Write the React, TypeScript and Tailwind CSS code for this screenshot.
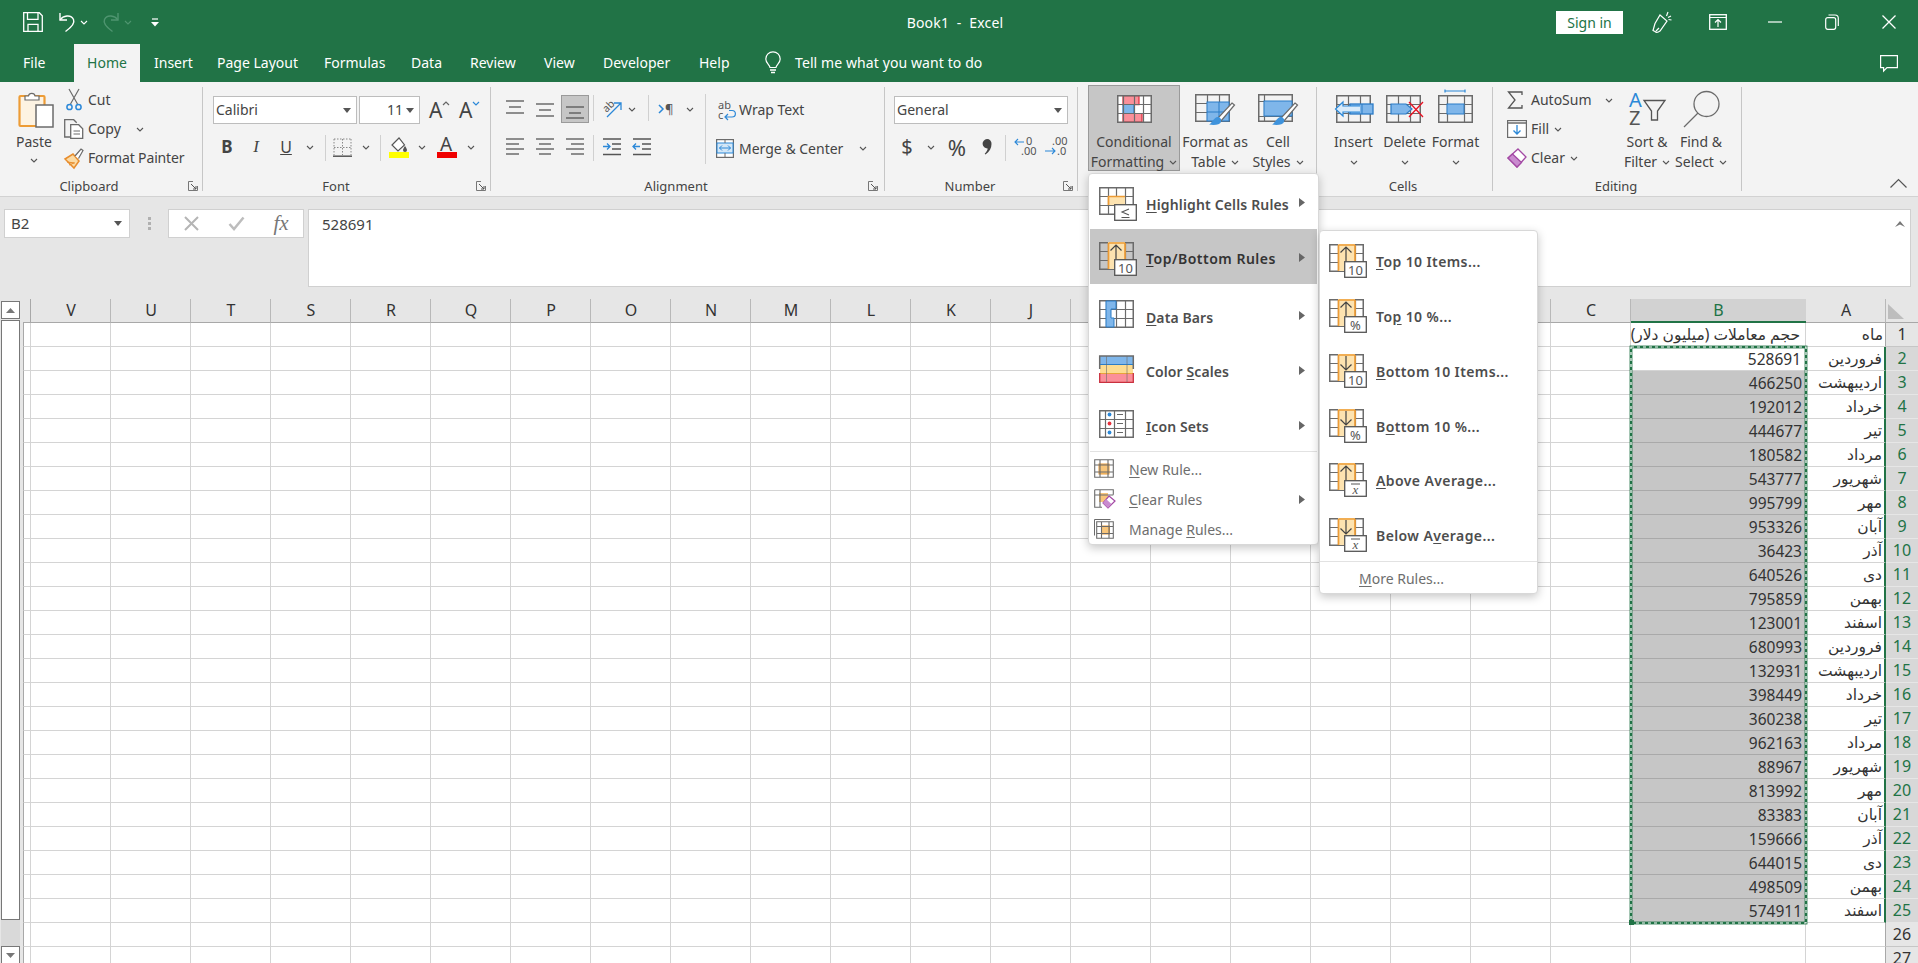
import React from "react";

type P = { w: number; h: number; children?: React.ReactNode; className?: string };
const S = ({ w, h, children, className }: P) => (
  <svg width={w} height={h} viewBox={`0 0 ${w} ${h}`} fill="none" className={`block shrink-0 overflow-visible ${className ?? ""}`}>
    {children}
  </svg>
);
const G = "#6b6b6b";
const FONT = "Noto Sans, DejaVu Sans, sans-serif";

const Chev = ({ className, c = "#555" }: { className?: string; c?: string }) => (
  <svg width="8" height="5" viewBox="0 0 8 5" fill="none" className={`block shrink-0 ${className ?? ""}`}>
    <path d="M1 1l3 3 3-3" stroke={c} strokeWidth="1.1" />
  </svg>
);
const Launcher = () => (
  <svg width="10" height="10" viewBox="0 0 10 10" fill="none" className="block shrink-0">
    <path d="M9.5 5v4.5H.5V.5H5" stroke="#777" />
    <path d="M3 3l5 5M8 5v3H5" stroke="#555" />
  </svg>
);
const Drop = () => (
  <svg width="8" height="5" viewBox="0 0 8 5" className="block shrink-0">
    <path d="M0 0h8L4 5z" fill="#555" />
  </svg>
);

/* ---------- title bar icons ---------- */
const SaveIcon = () => (
  <S w={20} h={20}>
    <path d="M.7.7h15.6l3 3v15.6H.7z M4.5 .7v6.6h10.5V.7 M5 19.3v-7h10v7" stroke="#fff" strokeWidth="1.3" />
  </S>
);
const UndoIcon = ({ c = "#fff", className }: { c?: string; className?: string }) => (
  <S w={18} h={20} className={className}>
    <path d="M2 1v7h7" stroke={c} strokeWidth="1.4" />
    <path d="M2.2 8C5 3.5 13 2 15.5 7.5 17.5 12 11 17 7.5 19.5" stroke={c} strokeWidth="1.4" />
  </S>
);
const CustomizeIcon = () => (
  <S w={8} h={9}>
    <path d="M1 1h6" stroke="#fff" strokeWidth="1.2" />
    <path d="M0 4h8L4 8.5z" fill="#fff" />
  </S>
);
const PenIcon = () => (
  <S w={22} h={24}>
    <path d="M9 5l7 6-7 10c-2 1.500-4 1.500-5 .5l-2-1 2-7z" stroke="#fff" strokeWidth="1.2" />
    <path d="M5 21l3-3M17 2l-1.500 4M20 6l-3 1.500M20.500 10l-3-.5" stroke="#fff" strokeWidth="1.2" />
  </S>
);
const DisplayIcon = () => (
  <S w={18} h={16}>
    <rect x=".7" y=".7" width="16.600" height="14.600" stroke="#fff" strokeWidth="1.3" />
    <path d="M.7 3.500h16.600M9 13V6M6 8.500L9 5.500l3 3" stroke="#fff" strokeWidth="1.2" />
  </S>
);
const MinIcon = () => (
  <S w={14} h={2}>
    <path d="M0 1h14" stroke="#fff" strokeWidth="1.2" />
  </S>
);
const RestoreIcon = () => (
  <S w={14} h={16}>
    <rect x=".7" y="3.700" width="10" height="11.600" rx="2" stroke="#fff" strokeWidth="1.2" />
    <path d="M3.500 1h6.500c2 0 3.300 1.200 3.300 3.300v7.700" stroke="#fff" strokeWidth="1.2" />
  </S>
);
const CloseIcon = () => (
  <S w={14} h={14}>
    <path d="M.5.5l13 13M13.500.5l-13 13" stroke="#fff" strokeWidth="1.300" />
  </S>
);
const CommentIcon = () => (
  <S w={18} h={17}>
    <path d="M.6.600h16.800v12H7l-3.400 3.400v-3.400H.6z" stroke="#fff" strokeWidth="1.200" />
  </S>
);
const BulbIcon = () => (
  <S w={16} h={23}>
    <path d="M5 15.500C4.500 12.500.8 11 .8 7A7.200 7.200 0 0 1 15.200 7c0 4-3.700 5.500-4.200 8.500z" stroke="#fff" strokeWidth="1.200" />
    <path d="M5 18h6M6 20.500h4" stroke="#fff" strokeWidth="1.300" />
  </S>
);

/* ---------- clipboard ---------- */
const PasteIcon = () => (
  <S w={36} h={37}>
    <rect x="1.500" y="5" width="25" height="30" rx="1" fill="#fdf3e2" stroke="#ed9c36" strokeWidth="2.200" />
    <path d="M7 9V5h3.500c.5-3.500 6-3.500 6.500 0h4v4z" fill="#fff" stroke={G} strokeWidth="1.200" />
    <rect x="18" y="14" width="17" height="22" fill="#fff" stroke={G} strokeWidth="1.500" />
  </S>
);
const CutIcon = () => (
  <S w={16} h={22}>
    <path d="M3 0l8.500 15M13 0L4.500 15" stroke={G} strokeWidth="1.200" />
    <circle cx="3.500" cy="18" r="2.600" stroke="#2b88d8" strokeWidth="1.500" />
    <circle cx="12.500" cy="18" r="2.600" stroke="#2b88d8" strokeWidth="1.500" />
  </S>
);
const CopyIcon = () => (
  <S w={20} h={20}>
    <path d="M6 18H.7V.7h9l3 3" stroke={G} strokeWidth="1.300" />
    <path d="M6.700 5.700h8l4 4v9.600h-12z" fill="#fff" stroke={G} strokeWidth="1.300" />
    <path d="M9.500 12h6.500M9.500 15h6.500" stroke={G} />
  </S>
);
const PainterIcon = () => (
  <S w={20} h={21}>
    <path d="M1 11l8-5 6 7-5 7z" fill="#fbdba5" stroke="#e88d2d" strokeWidth="1.500" />
    <path d="M3 14l8 1M5 17l5-2" stroke="#e88d2d" />
    <path d="M11 8l6-7 2 1.500-4.500 8" fill="#fff" stroke={G} strokeWidth="1.200" />
  </S>
);

/* ---------- font ---------- */
const SizeA = ({ up }: { up?: boolean }) => (
  <S w={20} h={20}>
    <text x="0" y="18" fontSize="21" fontFamily={FONT} fill="#444">A</text>
    <path d={up ? "M14 5l3-3 3 3" : "M14 2l3 3 3-3"} stroke={up ? "#666" : "#2b88d8"} strokeWidth="1.200" />
  </S>
);
const BorderIcon = () => (
  <S w={19} h={19}>
    <path d="M1 1h17M1 9.500h17M1 1v16M9.500 1v16M18 1v16" stroke="#888" strokeDasharray="1.500 1.500" />
    <path d="M0 18.200h19" stroke="#555" strokeWidth="1.500" />
  </S>
);
const FillColor = () => (
  <S w={20} h={21}>
    <path d="M10 1L3 8l6 6 6.500-6z" fill="#fff" stroke="#555" strokeWidth="1.200" />
    <path d="M16 9c1 1.500 2 3 2 4a2 2 0 0 1-4 0c0-1 1-2.500 2-4z" fill="#555" />
    <rect x="0" y="15" width="20" height="6" fill="#ffff00" />
  </S>
);
const FontColor = () => (
  <S w={20} h={22}>
    <text x="3" y="15" fontSize="19" fontFamily={FONT} fill="#444">A</text>
    <rect x="0" y="16" width="20" height="6" fill="#f00000" />
  </S>
);

/* ---------- alignment ---------- */
const Lines = ({ rows, w = 18, h = 20 }: { rows: [number, number, number][]; w?: number; h?: number }) => (
  <S w={w} h={h}>
    {rows.map(([a, b, y], i) => (
      <path key={i} d={`M${a} ${y}H${b}`} stroke="#555" strokeWidth="1.300" />
    ))}
  </S>
);
const Orient = () => (
  <S w={20} h={20}>
    <text x="0" y="11" fontSize="10.500" fontFamily={FONT} fill="#555" transform="rotate(-45 6 7)">ab</text>
    <path d="M5 18L19 4M12 4h7v7" stroke="#2b88d8" strokeWidth="1.300" />
  </S>
);
const Rtl = () => (
  <S w={18} h={14}>
    <path d="M1 3l4 4-4 4" stroke="#2b88d8" strokeWidth="1.500" />
    <text x="7" y="12" fontSize="13" fontFamily={FONT} fill="#555">¶</text>
  </S>
);
const Indent = ({ out }: { out?: boolean }) => (
  <S w={18} h={18}>
    <path d="M0 1h18M9 6h9M9 11h9M0 16.500h18" stroke="#555" strokeWidth="1.300" />
    <path d={out ? "M7 8.500H0M3 5.500L0 8.500l3 3" : "M0 8.500h7M4 5.500l3 3-3 3"} stroke="#2b88d8" strokeWidth="1.300" />
  </S>
);
const WrapIcon = () => (
  <S w={18} h={20}>
    <text x="0" y="9" fontSize="11" fontFamily={FONT} fill="#555">ab</text>
    <text x="0" y="19" fontSize="11" fontFamily={FONT} fill="#555">c</text>
    <path d="M8 17h6c4.500 0 4.500-6.500 0-6.500h-3M10 14l-3 3 3 3" stroke="#2b88d8" strokeWidth="1.200" />
  </S>
);
const MergeIcon = () => (
  <S w={18} h={19}>
    <rect x=".6" y=".6" width="16.800" height="17.800" fill="#fff" stroke={G} strokeWidth="1.200" />
    <rect x="1" y="4" width="16" height="10" fill="#d3e7f7" stroke="#2b88d8" />
    <path d="M3.500 9h11M6 6.500L3.500 9 6 11.500M12 6.500L14.500 9 12 11.500" stroke="#2b88d8" />
    <path d="M9 1v3M9 14v4" stroke={G} />
  </S>
);
const DecIcon = ({ more }: { more?: boolean }) => (
  <S w={22} h={20}>
    <text x={more ? 8 : 12} y="8" fontSize="11" fontFamily={FONT} fill="#555">{more ? ".00" : "0"}</text>
    <text x={more ? 13 : 7} y="18" fontSize="11" fontFamily={FONT} fill="#555">{more ? ".0" : ".00"}</text>
    {more ? (
      <path d="M1 14h10M8 11l3 3-3 3" stroke="#2b88d8" strokeWidth="1.100" />
    ) : (
      <path d="M10 5H1M4 2L1 5l3 3" stroke="#2b88d8" strokeWidth="1.100" />
    )}
  </S>
);
const CommaIcon = () => (
  <S w={10} h={16}>
    <path d="M5 0a4.500 4.500 0 0 1 4.500 5c0 4-2 8-6 10.500l-.8-.8c2-2 3-4 3-5.200a4.500 4.500 0 1 1 -.7-9.500z" fill="#444" />
  </S>
);

/* ---------- big grid icons ---------- */
const GridLines = ({ xs = [9, 17, 26], ys = [9, 18], w = 35 }: { xs?: number[]; ys?: number[]; w?: number }) => (
  <>
    <rect x=".75" y=".75" width={w - 1.5} height="26.500" stroke={G} strokeWidth="1.500" />
    {xs.map((x) => (
      <path key={x} d={`M${x + 0.5} 1V27`} stroke={G} strokeWidth="1.200" />
    ))}
    {ys.map((y) => (
      <path key={y} d={`M1 ${y + 0.5}H${w - 1}`} stroke={G} strokeWidth="1.200" />
    ))}
  </>
);
const Brush = () => (
  <g transform="translate(-1 3)">
    <path d="M38 6l2.500 2L27 24l-3-3z" fill="#fff" stroke={G} strokeWidth="1.200" />
    <path d="M23 20c3 0 5 2 4 5-1 2.500-6 3.500-12 2.500 3-1 4-6 8-7.500z" fill="#3f93dc" />
  </g>
);
const CFIcon = () => (
  <S w={35} h={28}>
    <rect x="0" y="0" width="35" height="28" fill="#fff" />
    <path d="M6 .7h16v9H6zM6 18.500h19V27H6z" fill="#fb8f99" stroke="#e02d3c" strokeWidth="1.200" />
    <path d="M6 9.500h11v9H6z" fill="#7fb6ea" stroke="#2b7cc7" strokeWidth="1.200" />
    <GridLines xs={[6, 17, 26]} />
  </S>
);
const TableIcon = () => (
  <S w={40} h={29}>
    <GridLines xs={[12, 24]} ys={[9, 18]} />
    <rect x="12" y="8" width="22" height="19" fill="#7fb6ea" stroke="#2b7cc7" />
    <path d="M12 18h22M24 8v19" stroke="#2b7cc7" />
    <Brush />
  </S>
);
const StylesIcon = () => (
  <S w={40} h={29}>
    <GridLines xs={[6]} ys={[7, 22]} />
    <rect x="6" y="7" width="28" height="15" fill="#7fb6ea" stroke="#2b7cc7" />
    <Brush />
  </S>
);
const InsertIcon = () => (
  <S w={40} h={28}>
    <g transform="translate(2 0)">
      <GridLines xs={[12, 24]} ys={[9, 18]} />
    </g>
    <rect x="16" y="9" width="23" height="10" fill="#7fb6ea" stroke="#2b7cc7" strokeWidth="1.300" />
    <path d="M28 9v10" stroke="#2b7cc7" />
    <path d="M26 11H9v-4L1.500 14 9 21v-4h17" fill="#d9ebfa" stroke="#2b88d8" strokeWidth="1.200" />
  </S>
);
const DeleteIcon = () => (
  <S w={38} h={28}>
    <GridLines xs={[12, 24]} ys={[9, 18]} />
    <path d="M5 9h15l6 5-6 5H5z" fill="#7fb6ea" stroke="#2b7cc7" strokeWidth="1.200" />
    <path d="M23 7l14 15M37 7L23 22" stroke="#e81123" strokeWidth="1.300" />
  </S>
);
const FormatIcon = () => (
  <S w={35} h={36}>
    <path d="M7 4h20M7 2.500v3M27 2.500v3" stroke="#2b88d8" strokeWidth="1.200" />
    <g transform="translate(0 8)">
      <GridLines xs={[9, 26]} ys={[9, 18]} />
      <rect x="9" y="9" width="17" height="10" fill="#7fb6ea" stroke="#2b7cc7" />
    </g>
  </S>
);
const SigmaIcon = () => (
  <S w={16} h={18}>
    <path d="M15 4V1H1.500L8 9l-6.500 8H15v-3" stroke="#555" strokeWidth="1.300" />
  </S>
);
const FillDown = () => (
  <S w={20} h={18}>
    <rect x=".6" y=".6" width="18.800" height="16.800" fill="#fff" stroke={G} strokeWidth="1.200" />
    <path d="M1 3h18" stroke={G} strokeWidth="1.500" />
    <path d="M10 5v9M6.500 10.500L10 14l3.500-3.500" stroke="#2b88d8" strokeWidth="1.300" />
  </S>
);
const EraserIcon = () => (
  <S w={20} h={20}>
    <path d="M11 1l8 8-9 10-9-9z" fill="#fff" stroke="#a349a4" strokeWidth="1.300" />
    <path d="M5.500 6l9 8.500L10 19l-9-9z" fill="#c98bcf" stroke="#a349a4" strokeWidth="1.300" />
  </S>
);
const SortIcon = () => (
  <S w={38} h={36}>
    <text x="1" y="16" fontSize="20" fontFamily={FONT} fill="#2b88d8">A</text>
    <text x="1" y="34" fontSize="20" fontFamily={FONT} fill="#555">Z</text>
    <path d="M16 9.500h21L29.500 20v9h-6v-9z" fill="#f3f3f3" stroke="#555" strokeWidth="1.300" />
  </S>
);
const FindIcon = () => (
  <S w={36} h={37}>
    <circle cx="23.500" cy="13" r="12.500" stroke={G} strokeWidth="1.300" />
    <path d="M15 22L1 36" stroke={G} strokeWidth="1.300" />
  </S>
);

/* ---------- menu icons ---------- */
const Box = ({ children }: { children: React.ReactNode }) => (
  <g>
    <rect x="15.700" y="17.700" width="21.600" height="15.600" fill="#fff" stroke="#555" strokeWidth="1.300" />
    {children}
  </g>
);
const BoxText = ({ t }: { t: string }) => (
  <text x="26.500" y="30.500" textAnchor="middle" fontSize="13" fontFamily={FONT} fill="#555">{t}</text>
);
const CondIcon = ({ kind, sub }: { kind: "up" | "down"; sub: string }) => (
  <S w={38} h={34}>
    <GridLines />
    <rect x="9" y="0" width="17" height="27" fill="#fde3b0" />
    <path d="M9.500 1v26M26 1v26" stroke="#ed9c36" strokeWidth="1.700" />
    <path d="M9.500 1H26" stroke="#ed9c36" strokeWidth="1.500" />
    <path
      d={kind === "up" ? "M17 17V3M11.500 8.500L17 3l5.500 5.500" : "M17 2v14M11.500 10.500L17 16l5.500-5.500"}
      stroke="#444"
      strokeWidth="1.200"
    />
    <Box>
      {sub === "x" ? (
        <>
          <path d="M22 21h9" stroke="#555" />
          <text x="26.500" y="31" textAnchor="middle" fontSize="13" fontStyle="italic" fontFamily="Liberation Serif, serif" fill="#555">x</text>
        </>
      ) : (
        <BoxText t={sub} />
      )}
    </Box>
  </S>
);
const HighlightIcon = () => (
  <S w={38} h={34}>
    <GridLines />
    <rect x="9" y="9" width="17" height="9" fill="#fde3b0" />
    <path d="M9.500 18V9.500H26" stroke="#ed9c36" strokeWidth="1.700" />
    <Box>
      <path d="M30 22l-7 3 7 3M22.500 30.500h8" stroke="#555" strokeWidth="1.100" />
    </Box>
  </S>
);
const DataBarsIcon = () => (
  <S w={38} h={28}>
    <GridLines xs={[7, 17, 26]} />
    <path d="M7 1h10v8H12v9h3v9H7z" fill="#7fb6ea" stroke="#2b7cc7" />
  </S>
);
const ScalesIcon = () => (
  <S w={38} h={28}>
    <rect x="1" y="1" width="33" height="8.500" fill="#7fb6ea" />
    <rect x="1" y="9.500" width="33" height="9" fill="#fddc91" />
    <rect x="1" y="18.500" width="33" height="8.500" fill="#fb8f99" />
    <path d="M.7 14V1h33.600v13" stroke={G} strokeWidth="1.500" />
    <path d="M1 9.500h33" stroke="#2b7cc7" />
    <path d="M1 18.500h33" stroke="#e8a33a" />
    <path d="M.7 18v9.300h33.600V18M1 27.300h33" stroke="#c9303e" strokeWidth="1.300" />
    <path d="M7.500 1v26M28 1v26" stroke={G} strokeOpacity=".6" />
  </S>
);
const SetsIcon = () => (
  <S w={38} h={28}>
    <GridLines xs={[6, 15, 26]} ys={[9, 18]} />
    <circle cx="10.500" cy="4.500" r="1.900" fill="#2b88d8" />
    <circle cx="10.500" cy="13.500" r="1.900" fill="#e8323e" />
    <circle cx="10.500" cy="22.500" r="1.900" fill="#2b88d8" />
    <path d="M18 4.500h6M18 13.500h6M18 22.500h6" stroke="#666" />
  </S>
);
const NewRuleIcon = () => (
  <S w={20} h={20}>
    <rect x="5" y="5" width="10" height="10" fill="#f8c57a" stroke="#ed9c36" />
    <path d="M.7.7h18.600v17.600H.7zM.7 6h18.600M.7 13h18.600M6 .7v17.600M14 .7v17.600" stroke={G} strokeWidth="1.100" />
  </S>
);
const ClearRuleIcon = () => (
  <S w={22} h={20}>
    <rect x="5" y="4" width="9" height="9" fill="#f8c57a" />
    <path d="M.7.700h18.600v5M.7.700v17.600H8M.7 6h18.600M6 .7v17" stroke={G} strokeWidth="1.100" />
    <path d="M15 7l6 5-7 7-5-5z" fill="#fff" stroke="#a349a4" strokeWidth="1.200" />
    <path d="M12 10l5.500 5-3.500 4-5-5z" fill="#c98bcf" />
  </S>
);
const ManageIcon = () => (
  <S w={20} h={20}>
    <path d="M3 19V3h16" stroke={G} strokeWidth="1" transform="translate(-2.500 -2.500)" />
    <rect x="7.500" y="7" width="8" height="8" fill="#f8c57a" stroke="#ed9c36" />
    <path d="M2.700 2.700h16.600v16.600H2.700zM2.700 7.500h16.600M2.700 14.500h16.600M7.500 2.700v16.600M15 2.700v16.600" stroke={G} strokeWidth="1.100" />
  </S>
);
const MenuArrow = ({ className }: { className: string }) => (
  <svg width="6" height="9" viewBox="0 0 6 9" className={`block shrink-0 ${className}`}>
    <path d="M0 0l6 4.500L0 9z" fill="#666" />
  </svg>
);

/* ---------- shared ribbon pieces ---------- */
const Group = ({ className, label, labelClass, launcher, launcherClass, children }: {
  className: string; label?: string; labelClass?: string; launcher?: boolean; launcherClass?: string; children: React.ReactNode;
}) => (
  <div className={`h-[104px] shrink-0 flex flex-col border-r border-[#c6c6c6] ${className}`}>
    <div className="h-[92px] shrink-0 flex">{children}</div>
    <div className="h-[14px] shrink-0 flex items-center text-[13px] leading-[14px] text-[#444]">
      <div className={`text-center ${labelClass ?? ""}`}>{label}</div>
      {launcher && <div className={launcherClass}><Launcher /></div>}
    </div>
  </div>
);
const Big = ({ className, icon, lines, chevLine2, iconClass }: {
  className: string; icon: React.ReactNode; lines: string[]; chevLine2?: boolean; iconClass?: string;
}) => (
  <div className={`flex flex-col items-center ${className}`}>
    <div className={`h-[45px] flex items-end justify-center ${iconClass ?? "pb-[9px]"}`}>{icon}</div>
    <div className="text-[14px] leading-[20px] text-[#444] whitespace-nowrap">{lines[0]}</div>
    {chevLine2 ? (
      <div className="text-[14px] leading-[20px] text-[#444] whitespace-nowrap flex items-center gap-[5px]">
        {lines[1]}<Chev />
      </div>
    ) : (
      <div className="h-[20px] flex items-center"><Chev /></div>
    )}
  </div>
);
const Slot = ({ className, children }: { className: string; children?: React.ReactNode }) => (
  <div className={`h-full flex items-center justify-center shrink-0 ${className}`}>{children}</div>
);
const Sep = ({ className }: { className: string }) => <div className={`w-px shrink-0 bg-[#d0d0d0] ${className}`} />;
const InputBox = ({ className, text, textClass }: { className: string; text: string; textClass?: string }) => (
  <div className={`h-[28px] bg-white border border-[#bdbdbd] flex items-center text-[14px] text-[#444] shrink-0 ${className}`}>
    <span className={`pb-[2px] ${textClass ?? ""}`}>{text}</span>
    <span className="ml-auto mr-[5px]"><Drop /></span>
  </div>
);

/* ---------- ribbon ---------- */
const Ribbon = () => (
  <div className="h-[115px] bg-[#f3f3f3] border-b border-[#d2d2d2] pt-[5px] flex">
    {/* Clipboard */}
    <Group className="w-[203px]" label="Clipboard" labelClass="w-[178px]" launcher launcherClass="ml-[10px]">
      <div className="w-[68px] flex flex-col items-center shrink-0">
        <div className="h-[41px] pt-[4px] pl-[4px]"><PasteIcon /></div>
        <div className="h-[4px]" />
        <div className="text-[14px] leading-[20px] text-[#444]">Paste</div>
        <div className="h-[17px] flex items-center"><Chev /></div>
      </div>
      <div className="flex flex-col gap-[3px] text-[14px] text-[#444]">
        <div className="h-[26px] flex items-center">
          <div className="w-[20px] flex justify-center mr-[-2px] ml-[-4px]"><CutIcon /></div>
          <span className="ml-[6px] pb-[2px]">Cut</span>
        </div>
        <div className="h-[26px] flex items-center">
          <div className="w-[20px] flex justify-center mr-[-2px] ml-[-4px]"><CopyIcon /></div>
          <span className="ml-[6px] pb-[2px]">Copy</span>
          <Chev className="ml-[15px]" />
        </div>
        <div className="h-[26px] flex items-center">
          <div className="w-[20px] flex justify-center mr-[-2px] ml-[-4px]"><PainterIcon /></div>
          <span className="ml-[6px] pb-[2px] tracking-[-0.15px]">Format Painter</span>
        </div>
      </div>
    </Group>

    {/* Font */}
    <Group className="w-[288px]" label="Font" labelClass="w-[266px]" launcher launcherClass="ml-[7px]">
      <div className="pl-[10px] flex flex-col">
        <div className="h-[36px] pt-[9px] flex">
          <InputBox className="w-[144px] pl-[2px]" text="Calibri" />
          <InputBox className="w-[61px] ml-[2px]" text="11" textClass="ml-[27px]" />
          <Slot className="w-[30px] ml-[4px]"><SizeA up /></Slot>
          <Slot className="w-[30px]"><SizeA /></Slot>
        </div>
        <div className="h-[24px] mt-[12px] flex text-[#444]">
          <Slot className="w-[28px] font-bold text-[17px]">B</Slot>
          <Slot className="w-[30px] italic text-[17px] font-['Liberation_Serif',serif]">I</Slot>
          <Slot className="w-[30px] text-[16px] underline">U</Slot>
          <Slot className="w-[18px]"><Chev /></Slot>
          <Sep className="h-[26px] ml-[6px]" />
          <Slot className="w-[32px]"><BorderIcon /></Slot>
          <Slot className="w-[16px]"><Chev /></Slot>
          <Sep className="h-[26px] ml-[6px]" />
          <Slot className="w-[36px]"><FillColor /></Slot>
          <Slot className="w-[10px]"><Chev /></Slot>
          <Slot className="w-[40px]"><FontColor /></Slot>
          <Slot className="w-[8px]"><Chev /></Slot>
        </div>
      </div>
    </Group>

    {/* Alignment */}
    <Group className="w-[394px]" label="Alignment" labelClass="w-[370px]" launcher launcherClass="ml-[7px]">
      <div className="w-[214px] pl-[10px] flex flex-col shrink-0">
        <div className="h-[28px] mt-[8px] flex">
          <Slot className="w-[28px]"><Lines rows={[[0, 18, 2], [3, 15, 8], [0, 18, 14]]} /></Slot>
          <Slot className="w-[28px] ml-[2px]"><Lines rows={[[0, 18, 5], [3, 15, 11], [0, 18, 17]]} /></Slot>
          <Slot className="w-[28px] ml-[2px] bg-[#c6c6c6] border border-[#9a9a9a]"><Lines rows={[[0, 18, 8], [3, 15, 14], [0, 18, 19]]} /></Slot>
          <Sep className="h-[26px] ml-[4px]" />
          <Slot className="w-[30px] ml-[3px]"><Orient /></Slot>
          <Slot className="w-[10px]"><Chev /></Slot>
          <Sep className="h-[26px] ml-[11px]" />
          <Slot className="w-[30px] ml-[3px]"><Rtl /></Slot>
          <Slot className="w-[16px]"><Chev /></Slot>
        </div>
        <div className="h-[24px] mt-[12px] flex">
          <Slot className="w-[28px]"><Lines rows={[[0, 18, 2], [0, 13, 7], [0, 18, 12], [0, 13, 17]]} /></Slot>
          <Slot className="w-[28px] ml-[2px]"><Lines rows={[[0, 18, 2], [3, 15, 7], [0, 18, 12], [3, 15, 17]]} /></Slot>
          <Slot className="w-[28px] ml-[2px]"><Lines rows={[[0, 18, 2], [5, 18, 7], [0, 18, 12], [5, 18, 17]]} /></Slot>
          <Sep className="h-[26px] ml-[4px]" />
          <Slot className="w-[30px] ml-[3px]"><Indent /></Slot>
          <Slot className="w-[30px]"><Indent out /></Slot>
        </div>
      </div>
      <Sep className="h-[70px] mt-[7px]" />
      <div className="flex flex-col text-[14px] text-[#444] whitespace-nowrap">
        <div className="h-[28px] mt-[9px] flex items-center">
          <div className="ml-[12px] w-[21px]"><WrapIcon /></div>
          <span className="pb-[2px]">Wrap Text</span>
        </div>
        <div className="h-[28px] mt-[10px] flex items-center">
          <div className="ml-[10px] w-[23px]"><MergeIcon /></div>
          <span>Merge &amp; Center</span>
          <Chev className="ml-[16px]" />
        </div>
      </div>
    </Group>

    {/* Number */}
    <Group className="w-[193px]" label="Number" labelClass="w-[170px]" launcher launcherClass="ml-[8px]">
      <div className="pl-[9px] flex flex-col">
        <div className="h-[36px] pt-[9px] flex">
          <InputBox className="w-[174px] pl-[2px]" text="General" />
        </div>
        <div className="h-[24px] mt-[12px] flex text-[#444]">
          <Slot className="w-[26px] text-[20px]">$</Slot>
          <Slot className="w-[22px]"><Chev /></Slot>
          <Slot className="w-[30px] text-[22px]">%</Slot>
          <Slot className="w-[30px]"><CommaIcon /></Slot>
          <Sep className="h-[26px] ml-[3px]" />
          <Slot className="w-[30px] ml-[4px]"><DecIcon /></Slot>
          <Slot className="w-[30px]"><DecIcon more /></Slot>
        </div>
      </div>
    </Group>

    {/* Styles */}
    <Group className="w-[239px]">
      <div className="ml-[10px] w-[92px] h-[86px] -mt-[2px] bg-[#c6c6c6] border border-[#9a9a9a] flex flex-col items-center shrink-0">
        <div className="h-[46px] pb-[9px] shrink-0 flex items-end"><CFIcon /></div>
        <div className="text-[14px] leading-[20px] text-[#444] whitespace-nowrap shrink-0">Conditional</div>
        <div className="text-[14px] leading-[20px] text-[#444] whitespace-nowrap shrink-0 flex items-center gap-[5px]">Formatting<Chev /></div>
      </div>
      <Big className="w-[68px] ml-[1px]" icon={<TableIcon />} lines={["Format as", "Table"]} chevLine2 />
      <Big className="w-[58px]" icon={<StylesIcon />} lines={["Cell", "Styles"]} chevLine2 />
    </Group>

    {/* Cells */}
    <Group className="w-[176px]" label="Cells" labelClass="w-[172px]">
      <div className="pl-[11px] flex">
        <Big className="w-[51px]" icon={<InsertIcon />} lines={["Insert"]} />
        <Big className="w-[51px]" icon={<DeleteIcon />} lines={["Delete"]} />
        <Big className="w-[51px]" icon={<FormatIcon />} lines={["Format"]} />
      </div>
    </Group>

    {/* Editing */}
    <Group className="w-[249px]" label="Editing" labelClass="w-[246px]">
      <div className="w-[124px] pl-[14px] flex flex-col gap-[3px] text-[14px] text-[#444] shrink-0">
        <div className="h-[26px] flex items-center">
          <div className="w-[24px]"><SigmaIcon /></div>
          <span className="w-[74px] pb-[2px]">AutoSum</span>
          <Chev />
        </div>
        <div className="h-[26px] flex items-center">
          <div className="w-[24px]"><FillDown /></div>
          <span className="pb-[2px]">Fill</span>
          <Chev className="ml-[5px]" />
        </div>
        <div className="h-[26px] flex items-center">
          <div className="w-[24px]"><EraserIcon /></div>
          <span className="pb-[2px]">Clear</span>
          <Chev className="ml-[5px]" />
        </div>
      </div>
      <Big className="w-[60px]" icon={<SortIcon />} lines={["Sort &", "Filter"]} chevLine2 iconClass="pb-[5px]" />
      <Big className="w-[48px]" icon={<FindIcon />} lines={["Find &", "Select"]} chevLine2 iconClass="pb-[4px]" />
    </Group>

    <div className="flex-1 flex justify-end items-end pb-[3px] pr-[11px] h-[104px]">
      <S w={17} h={9}><path d="M.5 8.500L8.500.5l8 8" stroke="#555" strokeWidth="1.200" /></S>
    </div>
  </div>
);

/* ---------- formula bar ---------- */
const FormulaBar = () => (
  <div className="h-[102px] bg-[#e6e6e6] pt-[12px] pl-[4px] flex items-start">
    <div className="w-[126px] h-[29px] bg-white border border-[#d0d0d0] flex items-center pl-[6px] text-[15px] text-[#444] shrink-0">
      B2
      <span className="ml-auto mr-[7px]"><Drop /></span>
    </div>
    <div className="w-[38px] h-[29px] flex flex-col items-center justify-center gap-[2px] shrink-0">
      <div className="w-[3px] h-[3px] bg-[#b0b0b0]" />
      <div className="w-[3px] h-[3px] bg-[#b0b0b0]" />
      <div className="w-[3px] h-[3px] bg-[#b0b0b0]" />
    </div>
    <div className="w-[136px] h-[29px] bg-white border border-[#d0d0d0] flex items-center shrink-0">
      <div className="w-[44px] flex justify-center">
        <S w={15} h={15}><path d="M1 1l13 13M14 1L1 14" stroke="#b5b5b5" strokeWidth="2" /></S>
      </div>
      <div className="w-[47px] flex justify-center">
        <S w={17} h={15}><path d="M1.500 8l4.500 5L15.500 1.500" stroke="#bdbdbd" strokeWidth="2.500" /></S>
      </div>
      <div className="w-[42px] text-center text-[21px] italic font-['Liberation_Serif',serif] text-[#777]">fx</div>
    </div>
    <div className="w-[1603px] h-[78px] ml-[4px] bg-white border border-[#d0d0d0] flex shrink-0">
      <div className="pl-[13px] pt-[4px] text-[15px] leading-[20px] text-[#444]">528691</div>
      <div className="ml-auto mr-[5px] mt-[11px]">
        <svg width="10" height="6" viewBox="0 0 10 6" className="block"><path d="M0 6l5-6 5 6-5-2.500z" fill="#777" /></svg>
      </div>
    </div>
  </div>
);

/* ---------- sheet ---------- */
const COLS = ["V", "U", "T", "S", "R", "Q", "P", "O", "N", "M", "L", "K", "J", "I", "H", "G", "F", "E", "D", "C", "B", "A"];
const MONTHS = ["فروردین", "اردیبهشت", "خرداد", "تیر", "مرداد", "شهریور", "مهر", "آبان", "آذر", "دی", "بهمن", "اسفند"];
const VALUES = [528691, 466250, 192012, 444677, 180582, 543777, 995799, 953326, 36423, 640526, 795859, 123001, 680993, 132931, 398449, 360238, 962163, 88967, 813992, 83383, 159666, 644015, 498509, 574911];

const Sheet = () => {
  const rows = Array.from({ length: 27 }, (_, i) => i + 1);
  return (
    <div className="flex h-[664px] overflow-hidden bg-[#e6e6e6]">
      <div className="w-[23px] shrink-0 pt-[2px] pl-[1px] flex flex-col">
        <div className="w-[19px] h-[18px] shrink-0 bg-white border border-[#777] flex items-center justify-center">
          <svg width="9" height="5" viewBox="0 0 9 5" className="block"><path d="M0 5l4.500-5L9 5z" fill="#777" /></svg>
        </div>
        <div className="w-[19px] h-[600px] shrink-0 mt-px bg-white border border-[#777]" />
        <div className="w-[19px] h-[26px] shrink-0 bg-[#d9d9d9]" />
        <div className="w-[19px] h-[18px] shrink-0 bg-white border border-[#777] flex items-center justify-center">
          <svg width="9" height="5" viewBox="0 0 9 5" className="block"><path d="M0 0l4.500 5L9 0z" fill="#777" /></svg>
        </div>
      </div>
      <div className="relative w-[1895px]">
        <div className="grid grid-cols-[8px_repeat(20,80px)_175px_80px_32px] auto-rows-[24px] text-[15.5px] leading-[23px] text-[#333]">
          {/* header row */}
          <div className="border-b border-r border-[#a8a8a8]" />
          {COLS.map((c) => (
            <div
              key={c}
              className={
                c === "B"
                  ? "text-center text-[16px] bg-[#d2d2d2] text-[#217346] border-b-2 border-[#217346]"
                  : "text-center text-[16px] pl-px border-r border-b border-r-[#b8b8b8] border-b-[#a8a8a8]"
              }
            >
              {c}
            </div>
          ))}
          <div className="border-b border-[#a8a8a8] flex pt-[5px] pl-[2px]">
            <svg width="16" height="15" viewBox="0 0 16 15" className="block"><path d="M0 0v15h16z" fill="#bdbdbd" /></svg>
          </div>
          {/* data rows */}
          {rows.map((r) => {
            const selected = r >= 2 && r <= 25;
            const val = selected ? VALUES[r - 2] : null;
            const month = selected ? MONTHS[(r - 2) % 12] : r === 1 ? "ماه" : "";
            return (
              <React.Fragment key={r}>
                <div className="bg-white border-l border-l-[#a8a8a8] border-r border-b border-r-[#d4d4d4] border-b-[#d4d4d4]" />
                {COLS.slice(0, 20).map((c) => (
                  <div key={c} className="bg-white border-r border-b border-[#d4d4d4]" />
                ))}
                <div
                  className={
                    r >= 3 && r <= 25
                      ? "bg-[#c6c6c6] border-b border-[#a9a9a9] text-right pr-[4px] leading-[25px] whitespace-nowrap"
                      : r === 2
                        ? "bg-white border-r border-b border-[#d4d4d4] text-right pr-[4px] leading-[25px] whitespace-nowrap"
                        : "bg-white border-r border-b border-[#d4d4d4] text-right pr-[5px] whitespace-nowrap"
                  }
                  dir={r === 1 ? "rtl" : undefined}
                >
                  {r === 1 ? <span className="block text-right">حجم معاملات (میلیون دلار)</span> : val}
                </div>
                <div
                  dir="rtl"
                  className={
                    selected
                      ? "bg-white border-b border-b-[#d4d4d4] border-r-2 border-r-[#217346] pr-[2px] whitespace-nowrap"
                      : "bg-white border-b border-b-[#d4d4d4] border-r border-r-[#a8a8a8] pr-[2px] whitespace-nowrap"
                  }
                >
                  {month}
                </div>
                <div
                  className={
                    selected
                      ? "bg-[#d8d8d8] text-[#217346] text-center text-[16px] border-b border-[#e6e6e6]"
                      : "bg-[#e6e6e6] text-[#333] text-center text-[16px] border-b border-[#c6c6c6]"
                  }
                >
                  {r}
                </div>
              </React.Fragment>
            );
          })}
        </div>
        {/* copy marquee */}
        <svg width="180" height="582" viewBox="0 0 180 582" fill="none" className="absolute left-[1606px] top-[46px] block pointer-events-none">
          <rect x="2" y="2" width="175" height="576" stroke="#217346" strokeWidth="2.800" />
          <rect x="2" y="2" width="175" height="576" stroke="#fff" strokeWidth="1.200" strokeDasharray="3 3" />
          <rect x="0" y="575" width="5" height="5" fill="#217346" />
        </svg>
      </div>
    </div>
  );
};

/* ---------- menus ---------- */
const U = ({ children }: { children: React.ReactNode }) => <u className="underline-offset-2">{children}</u>;

const MainRow = ({ icon, label, iconClass, textClass, arrowClass, active }: {
  icon: React.ReactNode; label: React.ReactNode; iconClass: string; textClass: string; arrowClass: string; active?: boolean;
}) => (
  <div className={`h-[55px] flex items-start pl-[9px] ${active ? "bg-[#c6c6c6] text-[#333]" : "text-[#4d4d4d]"}`}>
    <div className={`w-[38px] shrink-0 ${iconClass}`}>{icon}</div>
    <div className={`ml-[9px] flex-1 text-[14px] leading-[20px] font-semibold whitespace-nowrap ${textClass}`}>{label}</div>
    <MenuArrow className={`mr-[12px] ${arrowClass}`} />
  </div>
);
const SmallRow = ({ icon, label, arrow }: { icon: React.ReactNode; label: React.ReactNode; arrow?: boolean }) => (
  <div className="h-[30px] flex items-center pl-[4px] text-[14px] text-[#6e6e6e]">
    <div className="w-[22px] shrink-0">{icon}</div>
    <div className="ml-[13px] flex-1">{label}</div>
    {arrow && <MenuArrow className="mr-[12px]" />}
  </div>
);
const SubRow = ({ kind, sub, label }: { kind: "up" | "down"; sub: string; label: React.ReactNode }) => (
  <div className="h-[55px] flex items-start pl-[9px] text-[#4d4d4d]">
    <div className="w-[38px] pt-[13px] shrink-0"><CondIcon kind={kind} sub={sub} /></div>
    <div className="ml-[9px] pt-[21px] text-[14px] leading-[20px] font-semibold tracking-[0.4px] whitespace-nowrap">{label}</div>
  </div>
);

const Menus = () => (
  <>
    <div className="absolute left-[1088px] top-[173px] w-[231px] h-[372px] bg-white rounded-[4px] border border-[#d8d8d8] shadow-[0_3px_10px_rgba(0,0,0,0.22)] px-px flex flex-col">
      <MainRow icon={<HighlightIcon />} iconClass="pt-[13px]" textClass="pt-[21px] tracking-[0.15px]" arrowClass="mt-[24px]" label={<><U>H</U>ighlight Cells Rules</>} />
      <MainRow active icon={<CondIcon kind="up" sub="10" />} iconClass="pt-[13px]" textClass="pt-[20px] tracking-[0.5px]" arrowClass="mt-[24px]" label={<><U>T</U>op/Bottom Rules</>} />
      <MainRow icon={<DataBarsIcon />} iconClass="pt-[16px]" textClass="pt-[24px] tracking-[0.1px]" arrowClass="mt-[27px]" label={<><U>D</U>ata Bars</>} />
      <MainRow icon={<ScalesIcon />} iconClass="pt-[16px]" textClass="pt-[23px] tracking-[0.1px]" arrowClass="mt-[27px]" label={<>Color <U>S</U>cales</>} />
      <MainRow icon={<SetsIcon />} iconClass="pt-[16px]" textClass="pt-[23px] tracking-[0.1px]" arrowClass="mt-[27px]" label={<><U>I</U>con Sets</>} />
      <div className="mt-[2px] h-[3px] border-t border-[#e2e2e2]" />
      <SmallRow icon={<NewRuleIcon />} label={<><U>N</U>ew Rule...</>} />
      <SmallRow icon={<ClearRuleIcon />} label={<><U>C</U>lear Rules</>} arrow />
      <SmallRow icon={<ManageIcon />} label={<>Manage <U>R</U>ules...</>} />
    </div>
    <div className="absolute left-[1319px] top-[230px] w-[219px] h-[364px] bg-white rounded-[4px] border border-[#d8d8d8] shadow-[0_3px_10px_rgba(0,0,0,0.22)] flex flex-col">
      <SubRow kind="up" sub="10" label={<><U>T</U>op 10 Items...</>} />
      <SubRow kind="up" sub="%" label={<>To<U>p</U> 10 %...</>} />
      <SubRow kind="down" sub="10" label={<><U>B</U>ottom 10 Items...</>} />
      <SubRow kind="down" sub="%" label={<>B<U>o</U>ttom 10 %...</>} />
      <SubRow kind="up" sub="x" label={<><U>A</U>bove Average...</>} />
      <SubRow kind="down" sub="x" label={<>Below A<U>v</U>erage...</>} />
      <div className="mt-px border-t border-[#e2e2e2] h-[32px] flex items-center pt-[2px] pl-[39px] text-[14px] text-[#6e6e6e]">
        <span><U>M</U>ore Rules...</span>
      </div>
    </div>
  </>
);

export default function App() {
  return (
    <div className="relative w-[1918px] h-[963px] overflow-hidden font-['Noto_Sans','DejaVu_Sans',sans-serif] bg-[#e6e6e6]">
      {/* Title bar */}
      <div className="h-[44px] bg-[#217346] flex items-center text-white">
        <div className="ml-[23px]"><SaveIcon /></div>
        <div className="ml-[15px]"><UndoIcon /></div>
        <Chev c="#fff" className="ml-[4px]" />
        <div className="ml-[14px]"><UndoIcon c="#4f9570" className="-scale-x-100" /></div>
        <Chev c="#4f9570" className="ml-[4px]" />
        <div className="ml-[19px]"><CustomizeIcon /></div>
        <div className="ml-[723px] text-[14px] tracking-[0.2px] whitespace-pre w-[146px] text-center">Book1  -  Excel</div>
        <div className="ml-[528px] w-[67px] h-[23px] bg-white text-[#217346] text-[14px] flex items-center justify-center">Sign in</div>
        <div className="ml-[28px]"><PenIcon /></div>
        <div className="ml-[36px]"><DisplayIcon /></div>
        <div className="ml-[41px]"><MinIcon /></div>
        <div className="ml-[43px]"><RestoreIcon /></div>
        <div className="ml-[43px]"><CloseIcon /></div>
      </div>
      {/* Tabs */}
      <div className="h-[38px] bg-[#217346] flex items-stretch text-[14px] text-white">
        <div className="w-[74px] pl-[23px] flex items-center pb-[2px]">File</div>
        <div className="w-[66px] bg-[#f3f3f3] text-[#217346] flex items-center justify-center pb-[2px]">Home</div>
        <div className="ml-[14px] flex items-center pb-[2px] whitespace-nowrap">
          <span className="w-[63px]">Insert</span>
          <span className="w-[107px]">Page Layout</span>
          <span className="w-[87px]">Formulas</span>
          <span className="w-[59px]">Data</span>
          <span className="w-[74px]">Review</span>
          <span className="w-[59px]">View</span>
          <span className="w-[96px]">Developer</span>
          <span className="w-[64px]">Help</span>
        </div>
        <div className="ml-[2px] w-[16px] flex items-center"><BulbIcon /></div>
        <div className="ml-[14px] flex items-center pb-[2px] tracking-[0.1px]">Tell me what you want to do</div>
        <div className="ml-auto mr-[20px] flex items-center"><CommentIcon /></div>
      </div>
      <Ribbon />
      <FormulaBar />
      <Sheet />
      <Menus />
    </div>
  );
}
